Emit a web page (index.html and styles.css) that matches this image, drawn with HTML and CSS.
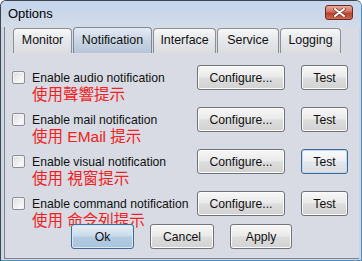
FILE: index.html
```html
<!DOCTYPE html>
<html>
<head>
    <link rel="stylesheet" href="styles.css">
</head>
<body>
<div class="window">
    <div class="titlebar">
        <span class="title">Options</span>
        <div class="close">
            <svg width="13" height="9" viewBox="0 0 13 9">
                <path d="M2 1 L11 8 M11 1 L2 8" stroke="#7a3026" stroke-width="3.4" stroke-linecap="round"/>
                <path d="M2 1 L11 8 M11 1 L2 8" stroke="#ffffff" stroke-width="2" stroke-linecap="round"/>
            </svg>
        </div>
    </div>
    <div class="client">
        <div class="tabs">
            <div class="tab">Monitor</div>
            <div class="tab active">Notification</div>
            <div class="tab">Interface</div>
            <div class="tab">Service</div>
            <div class="tab">Logging</div>
        </div>

        <div class="rows">
            <div class="row">
                <div class="left">
                    <label class="check"><span class="box"></span>Enable audio notification</label>
                    <div class="zh">使用聲響提示</div>
                </div>
                <button class="btn configure">Configure...</button>
                <button class="btn test">Test</button>
            </div>
            <div class="row">
                <div class="left">
                    <label class="check"><span class="box"></span>Enable mail notification</label>
                    <div class="zh">使用 EMail 提示</div>
                </div>
                <button class="btn configure">Configure...</button>
                <button class="btn test">Test</button>
            </div>
            <div class="row">
                <div class="left">
                    <label class="check"><span class="box"></span>Enable visual notification</label>
                    <div class="zh">使用 視窗提示</div>
                </div>
                <button class="btn configure">Configure...</button>
                <button class="btn test focus">Test</button>
            </div>
            <div class="row">
                <div class="left">
                    <label class="check"><span class="box"></span>Enable command notification</label>
                    <div class="zh">使用 命令列提示</div>
                </div>
                <button class="btn configure">Configure...</button>
                <button class="btn test">Test</button>
            </div>
        </div>

        <div class="footer">
            <button class="btn ok">Ok</button>
            <button class="btn cancel">Cancel</button>
            <button class="btn apply">Apply</button>
        </div>
    </div>
</div>
</body>
</html>
```

FILE: styles.css
```css
body {
    margin: 0;
    font-family: "Liberation Sans", Arial, sans-serif;
    background: #ffffff;
}

.window {
    width: 362px;
    height: 261px;
    box-sizing: border-box;
    border: 1px solid #3d4450;
    border-right-color: #4f8fc4;
    border-bottom-color: #4f8fc4;
    border-radius: 6px 6px 0 0;
    background: #cdd6e3;
    display: flex;
    flex-direction: column;
    overflow: hidden;
}

.titlebar {
    height: 26px;
    flex: none;
    display: flex;
    align-items: center;
    justify-content: space-between;
    padding: 0 8px 0 7px;
    background: linear-gradient(#c4d5ec, #ccd8e9 60%, #d3dbe7);
}

.title {
    font-size: 13px;
    color: #000;
    margin-top: -2px;
}

.close {
    width: 26px;
    height: 13px;
    border: 1px solid #6b2b22;
    border-radius: 3px;
    background: linear-gradient(#e9a99a, #d0705f 45%, #b8402f 55%, #cc6a50);
    display: flex;
    align-items: center;
    justify-content: center;
    margin-top: -4px;
}

.client {
    flex: 1;
    margin: 0 2px 1px 3px;
    border-left: 1px solid #7d848f;
    border-bottom: 1px solid #7d848f;
    background: #d8dbe4;
}

.tabs {
    display: flex;
    padding: 0 0 0 8px;
    height: 26px;
    align-items: flex-end;
}

.tab {
    height: 25px;
    box-sizing: border-box;
    border: 1px solid #8b8f96;
    border-bottom: none;
    border-radius: 4px 4px 0 0;
    background: linear-gradient(#f7f7f8, #e6e7ea 50%, #dcdde1);
    font-size: 12.4px;
    line-height: 23px;
    text-align: center;
    color: #111;
    margin-right: 1px;
}

.tab:nth-child(1) { width: 59px; }
.tab:nth-child(2) { width: 79px; }
.tab:nth-child(3) { width: 63px; }
.tab:nth-child(4) { width: 62px; }
.tab:nth-child(5) { width: 61px; }

.tab.active {
    height: 26px;
    line-height: 25px;
    background: linear-gradient(#e3eaf3, #c9d5e3 50%, #b6c5d7);
    border-color: #7d8796;
}

.rows {
    padding-top: 12px;
    display: flex;
    flex-direction: column;
    gap: 17px;
}

.row {
    height: 25px;
    display: flex;
    align-items: flex-start;
}

.left {
    flex: 1;
    padding-left: 7px;
}

.check {
    display: flex;
    align-items: center;
    height: 25px;
    font-size: 12.2px;
    color: #111;
    white-space: nowrap;
}

.box {
    width: 11px;
    height: 11px;
    border: 1px solid #8e9097;
    border-radius: 2px;
    background: linear-gradient(135deg, #dcdde2, #f6f6f7 70%);
    box-shadow: inset 0 0 0 1px #f4f4f6;
    margin-right: 7px;
    flex: none;
}

.zh {
    margin: -4px 0 0 20px;
    font-family: "Liberation Sans", "Noto Sans CJK TC", sans-serif;
    font-size: 15.5px;
    line-height: 18px;
    color: #f52020;
    white-space: nowrap;
    position: relative;
}

.btn {
    height: 25px;
    box-sizing: border-box;
    border: 1px solid #707378;
    border-radius: 3px;
    background: linear-gradient(#f7f7f7, #ebebeb 45%, #dcdcdc 55%, #d2d2d2);
    box-shadow: inset 0 0 0 1px #fbfbfb;
    font-family: "Liberation Sans", Arial, sans-serif;
    font-size: 12.2px;
    color: #111;
    padding: 0;
    position: relative;
}

.configure {
    width: 88px;
    margin-right: 16px;
}

.test {
    width: 47px;
    margin-right: 11px;
}

.test.focus {
    border-color: #3c6a96;
    background: linear-gradient(#fafbfc, #eef0f3 45%, #e3e6ea 55%, #dadde2);
    box-shadow: inset 0 0 0 1px #c6d8ea;
}

.footer {
    display: flex;
    gap: 16px;
    padding: 8px 0 0 66px;
    position: relative;
}

.ok {
    width: 63px;
    border-color: #3e6c94;
    background: linear-gradient(#e6eff7, #cbdcec 45%, #b3cbe0 55%, #a9c4dc);
    box-shadow: inset 0 0 0 1px #d9e7f3;
}

.cancel {
    width: 64px;
}

.apply {
    width: 62px;
}
```
